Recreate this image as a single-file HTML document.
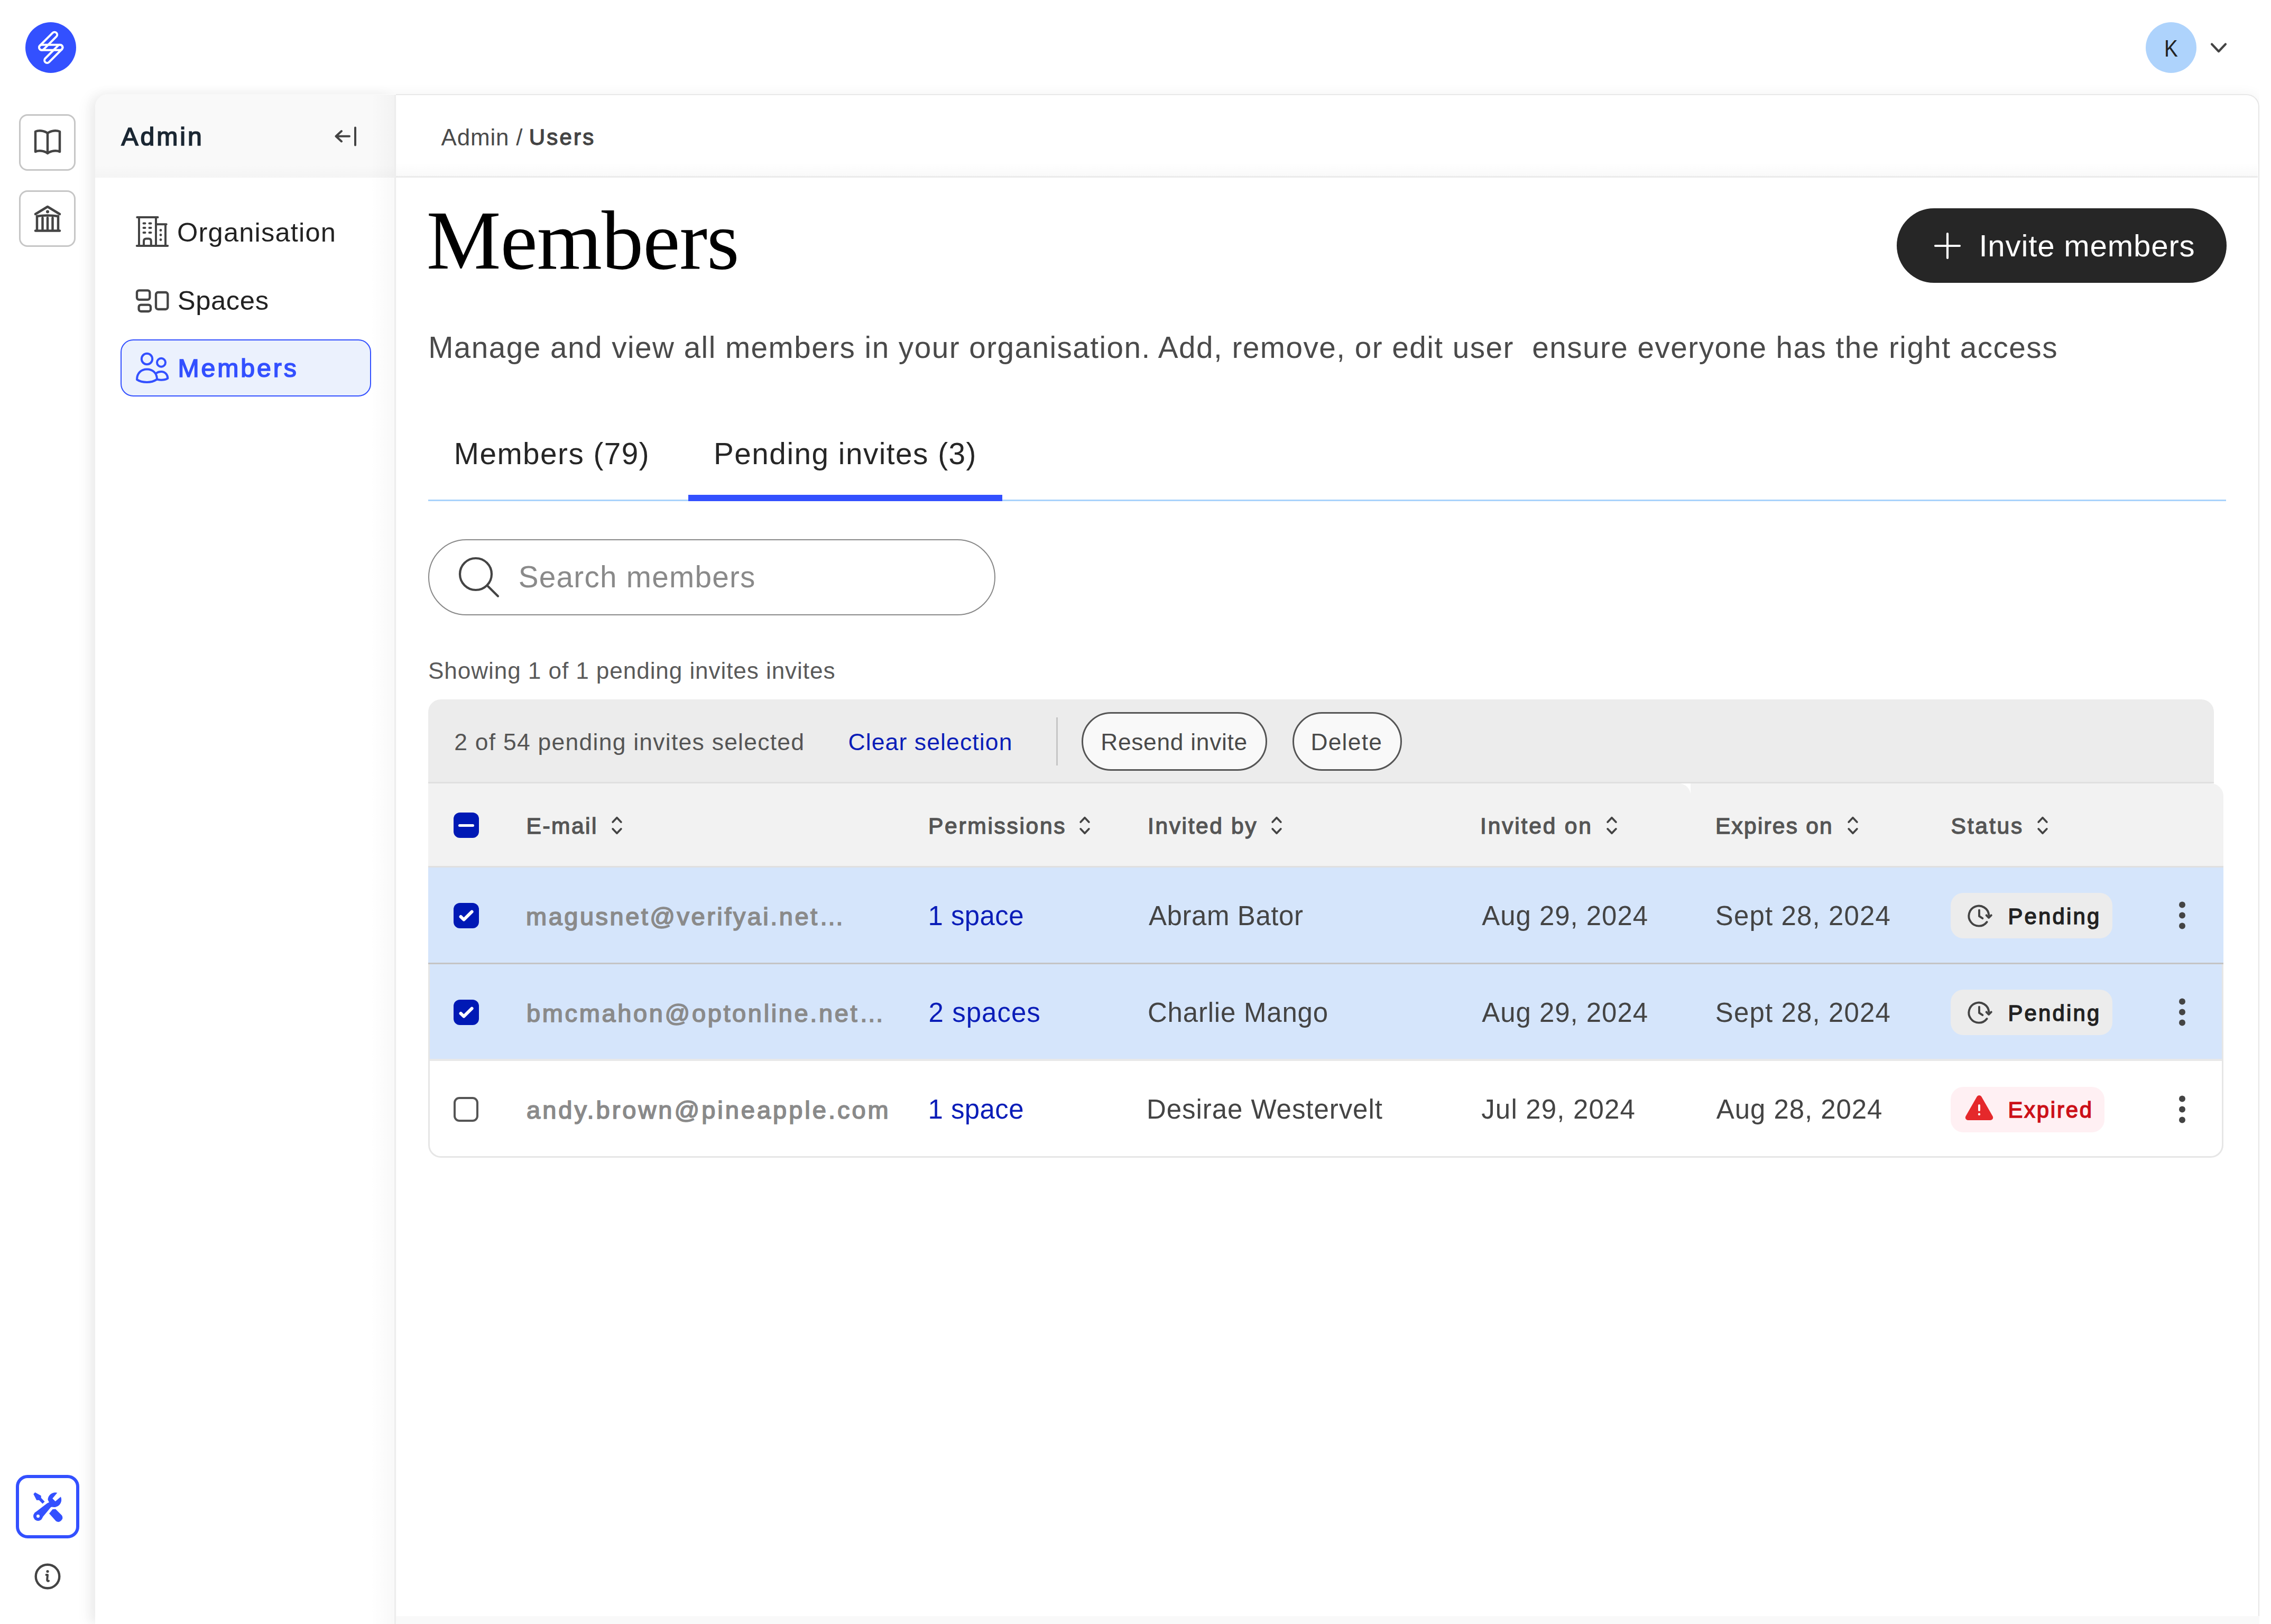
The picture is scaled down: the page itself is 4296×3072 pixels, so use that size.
<!DOCTYPE html><html><head><meta charset="utf-8"><style>
html,body{margin:0;padding:0;}
body{width:4296px;height:3072px;overflow:hidden;position:relative;background:#ffffff;font-family:"Liberation Sans",sans-serif;}
.t{position:absolute;white-space:pre;}
</style></head><body>
<div style="position:absolute;left:180px;top:178px;width:4094px;height:2894px;box-shadow:0 0 26px rgba(0,0,0,0.05);border-top-left-radius:24px;border-top-right-radius:24px;clip-path:inset(-60px 0 0 -60px);"></div>
<div style="position:absolute;left:749px;top:178px;width:3525px;height:2879px;background:#fff;border-top:2px solid #e8e8e8;border-right:2px solid #e6e6e6;box-sizing:border-box;border-top-right-radius:24px;"></div>
<div style="position:absolute;left:749px;top:3057px;width:3525px;height:15px;background:#f9f9f9;"></div>
<div style="position:absolute;left:749px;top:308px;width:3522px;height:25px;background:linear-gradient(rgba(0,0,0,0),rgba(0,0,0,0.022));"></div>
<div style="position:absolute;left:749px;top:333px;width:3522px;height:3px;background:#ebebeb;"></div>
<div style="position:absolute;left:180px;top:179px;width:569px;height:2893px;background:#fff;border-top-left-radius:24px;overflow:hidden;box-shadow:-14px 0 24px rgba(0,0,0,0.05);"><div style="position:absolute;left:0;top:0;width:569px;height:157px;background:#f9f9f9;"></div><div style="position:absolute;left:0;top:132px;width:569px;height:25px;background:linear-gradient(rgba(0,0,0,0),rgba(0,0,0,0.018));"></div><div style="position:absolute;left:0;top:0;width:2px;height:2893px;"></div><div style="position:absolute;right:0;top:0;width:48px;height:2893px;background:linear-gradient(90deg,rgba(0,0,0,0),rgba(0,0,0,0.028));"></div><div style="position:absolute;right:0;top:0;width:3px;height:2893px;background:#ededed;"></div></div>
<div style="position:absolute;left:48px;top:42px;width:96px;height:96px;border-radius:50%;background:#3350ff;"></div>
<svg style="position:absolute;left:48px;top:42px;overflow:visible" width="96" height="96" viewBox="48 42 96 96"><g fill="none" stroke="#fff" stroke-width="4"><rect x="69.05" y="72.7" width="44.1" height="10" rx="5" transform="rotate(-45 91.1 77.7)"/><rect x="74" y="84.7" width="44.5" height="10" rx="5"/><rect x="79.1" y="96.85" width="44.4" height="10" rx="5" transform="rotate(-45 101.3 101.85)"/></g></svg>
<div style="position:absolute;left:36px;top:216px;width:107px;height:107px;box-sizing:border-box;border:3px solid #c6c6c6;border-radius:16px;background:#fff;"></div>
<svg style="position:absolute;left:36px;top:216px;overflow:visible" width="107" height="107" viewBox="36 216 107 107"><g fill="none" stroke="#444444" stroke-width="4.5" stroke-linejoin="round" stroke-linecap="round"><path d="M90,252 C84,247 73,246 67,249 L67,287 C73,284 84,285 90,290 C96,285 107,284 113,287 L113,249 C107,246 96,247 90,252 Z"/><path d="M90,252 L90,289"/></g></svg>
<div style="position:absolute;left:36px;top:360px;width:107px;height:107px;box-sizing:border-box;border:3px solid #c6c6c6;border-radius:16px;background:#fff;"></div>
<svg style="position:absolute;left:36px;top:360px;overflow:visible" width="107" height="107" viewBox="36 360 107 107"><g fill="none" stroke="#444444" stroke-width="4.5" stroke-linejoin="round" stroke-linecap="round"><path d="M67,405 L90,391 L113,405"/><path d="M70,409 Q90,406 110,409"/><path d="M70,409 L70,435 M80.5,412 L80.5,435 M90,412 L90,435 M99.5,412 L99.5,435 M110,409 L110,435"/><path d="M67,436.5 L113,436.5"/></g><circle cx="90" cy="400.5" r="3" fill="#444444"/></svg>
<div style="position:absolute;left:30px;top:2790px;width:120px;height:120px;box-sizing:border-box;border:6px solid #3350ff;border-radius:22px;background:#fff;"></div>
<svg style="position:absolute;left:50px;top:2810px;overflow:visible" width="80" height="80" viewBox="50 2810 80 80"><g transform="translate(50 2810)" fill="#3350ff"><path d="M16.3,13 L27.6,19.2 L27.8,23.6 L34.5,30.5 L30.5,34.5 L23.9,27.8 L19.2,27.8 L13.3,16.3 Z"/><path d="M43,53 L49.5,45 L55,44.6 L67,56.5 A8,8 0 0 1 56,67.5 Z"/><path d="M14.8,52.2 L39.4,33.5 L47,30 L53,39 L46.3,40.9 L27.6,63.5 Z"/><circle cx="22" cy="58" r="9"/><path d="M40.5,27 A14,14 0 0 1 58.4,13.8 L49.3,24.6 L54.7,30 L65,21.2 A14,14 0 0 1 47,40 Z"/></g><circle cx="72" cy="2868" r="3" fill="#fff"/></svg>
<svg style="position:absolute;left:60px;top:2952px;overflow:visible" width="60" height="60" viewBox="60 2952 60 60"><circle cx="90" cy="2982" r="22.3" fill="none" stroke="#444444" stroke-width="4.4"/><circle cx="90" cy="2972.5" r="2.6" fill="#444444"/><path d="M87.5,2979 L90,2979 L89.2,2988 Q89,2991.5 92,2990.5" fill="none" stroke="#444444" stroke-width="4" stroke-linecap="round" stroke-linejoin="round"/></svg>
<div style="position:absolute;left:4059px;top:42px;width:96px;height:96px;border-radius:50%;background:#aed3fc;"></div>
<div id="avatar_k" class="t" style="left:4094.0px;top:70.1px;font-size:44.00px;line-height:44.00px;color:#222222;letter-spacing:0.00px;font-family:'Liberation Sans', sans-serif;transform:scaleX(0.88);transform-origin:0 0;">K</div>
<svg style="position:absolute;left:4175px;top:75px;overflow:visible" width="45" height="30" viewBox="4175 75 45 30"><path d="M4184,83.5 L4197,97.2 L4210,83.5" fill="none" stroke="#444444" stroke-width="4.2" stroke-linecap="round" stroke-linejoin="round"/></svg>
<div id="admin_h" class="t" style="left:229.4px;top:234.2px;font-size:48.23px;line-height:48.23px;color:#1b2733;-webkit-text-stroke:1.70px currentColor;letter-spacing:3.92px;font-family:'Liberation Sans', sans-serif;">Admin</div>
<svg style="position:absolute;left:625px;top:230px;overflow:visible" width="60" height="55" viewBox="625 230 60 55"><g fill="none" stroke="#444444" stroke-width="4" stroke-linecap="round" stroke-linejoin="round"><path d="M646,248 L635.5,257.7 L646,267.5 M635.5,257.7 L661,257.7 M672,241.5 L672,274.5"/></g></svg>
<svg style="position:absolute;left:250px;top:400px;overflow:visible" width="80" height="80" viewBox="250 400 80 80"><g fill="none" stroke="#444444" stroke-width="4" stroke-linecap="round" stroke-linejoin="round"><path d="M258.8,465 L317.2,465"/><path d="M263,465 L263,411 L295,411 L295,465"/><path d="M259.3,411 L298.5,411"/><path d="M295,424.2 L314.7,424.2 M313,424.2 L313,465"/><path d="M272,465 L272,456 Q272,451.5 276.5,451.5 L281.3,451.5 Q285.8,451.5 285.8,456 L285.8,465"/><path d="M271.5,422.4 L274.5,422.4 M282.5,422.4 L285.5,422.4 M271.5,431 L274.5,431 M282.5,431 L285.5,431 M271.5,440 L274.5,440 M282.5,440 L285.5,440"/></g><g fill="#444444"><circle cx="304" cy="435.5" r="2.4"/><circle cx="304" cy="444.5" r="2.4"/><circle cx="304" cy="453.5" r="2.4"/></g></svg>
<div id="nav_org" class="t" style="left:335.0px;top:414.9px;font-size:50.60px;line-height:50.60px;color:#222222;letter-spacing:1.18px;font-family:'Liberation Sans', sans-serif;">Organisation</div>
<svg style="position:absolute;left:250px;top:540px;overflow:visible" width="80" height="60" viewBox="250 540 80 60"><g fill="none" stroke="#444444" stroke-width="4.3" stroke-linejoin="round"><rect x="259" y="549.3" width="24.3" height="17.5" rx="4"/><rect x="262.6" y="576.6" width="22.4" height="12.4" rx="4"/><rect x="295" y="553" width="22.3" height="32" rx="4"/></g></svg>
<div id="nav_sp" class="t" style="left:335.8px;top:543.5px;font-size:50.80px;line-height:50.80px;color:#222222;letter-spacing:0.56px;font-family:'Liberation Sans', sans-serif;">Spaces</div>
<div style="position:absolute;left:228px;top:642px;width:474px;height:108px;box-sizing:border-box;border:2px solid #3350ff;border-radius:24px;background:#ebf1fd;"></div>
<svg style="position:absolute;left:250px;top:660px;overflow:visible" width="80" height="80" viewBox="250 660 80 80"><g fill="none" stroke="#3350ff" stroke-width="4" stroke-linecap="round" stroke-linejoin="round"><circle cx="278" cy="679" r="10.2"/><circle cx="305" cy="685.8" r="8"/><path d="M259,718 C259,706 267,698.5 278,698.5 C289,698.5 297,706 297,717.5 C291,721.5 285,723 278,723 C271,723 264,721.5 259,718 Z"/><path d="M295.5,706 C298,704 301.5,703 305,703 C312,703 317.3,708.5 317.3,715.7 C313.5,718 309.5,718.7 305,718.7 C302.5,718.7 300,718.3 297.6,717.8"/></g></svg>
<div id="nav_mem" class="t" style="left:336.4px;top:672.2px;font-size:48.23px;line-height:48.23px;color:#3350ff;-webkit-text-stroke:1.70px currentColor;letter-spacing:3.92px;font-family:'Liberation Sans', sans-serif;">Members</div>
<div id="bc_admin" class="t" style="left:834.6px;top:237.6px;font-size:44.00px;line-height:44.00px;color:#4a4a4a;letter-spacing:0.80px;font-family:'Liberation Sans', sans-serif;">Admin / </div>
<div id="bc_users" class="t" style="left:1000.8px;top:238.7px;font-size:41.97px;line-height:41.97px;color:#444444;-webkit-text-stroke:1.40px currentColor;letter-spacing:3.20px;font-family:'Liberation Sans', sans-serif;">Users</div>
<div id="title" class="t" style="left:806.8px;top:375.5px;font-size:158.40px;line-height:158.40px;color:#000000;letter-spacing:-1.04px;font-family:'Liberation Serif', serif;">Members</div>
<div style="position:absolute;left:3588px;top:394px;width:624px;height:141px;border-radius:71px;background:#262626;"></div>
<svg style="position:absolute;left:3650px;top:430px;overflow:visible" width="70" height="70" viewBox="3650 430 70 70"><path d="M3661,465 L3707,465 M3684,442 L3684,488" fill="none" stroke="#fff" stroke-width="4.2" stroke-linecap="round"/></svg>
<div id="btn" class="t" style="left:3743.4px;top:435.5px;font-size:58.20px;line-height:58.20px;color:#ffffff;letter-spacing:0.81px;font-family:'Liberation Sans', sans-serif;">Invite members</div>
<div id="subtitle" class="t" style="left:810.2px;top:629.8px;font-size:56.70px;line-height:56.70px;color:#4a4a4a;letter-spacing:1.46px;font-family:'Liberation Sans', sans-serif;">Manage and view all members in your organisation. Add, remove, or edit user  ensure everyone has the right access</div>
<div style="position:absolute;left:810px;top:945px;width:3401px;height:3px;background:#a9d3fb;"></div>
<div style="position:absolute;left:1302px;top:936px;width:594px;height:12px;background:#3350ff;"></div>
<div id="tab1" class="t" style="left:858.8px;top:830.8px;font-size:56.70px;line-height:56.70px;color:#262626;letter-spacing:1.45px;font-family:'Liberation Sans', sans-serif;">Members (79)</div>
<div id="tab2" class="t" style="left:1350.0px;top:830.8px;font-size:56.70px;line-height:56.70px;color:#262626;letter-spacing:1.50px;font-family:'Liberation Sans', sans-serif;">Pending invites (3)</div>
<div style="position:absolute;left:810px;top:1020px;width:1073px;height:144px;box-sizing:border-box;border:2.6px solid #888888;border-radius:72px;background:#fff;"></div>
<svg style="position:absolute;left:860px;top:1045px;overflow:visible" width="100" height="100" viewBox="860 1045 100 100"><g fill="none" stroke="#444444" stroke-width="4.2" stroke-linecap="round"><circle cx="900" cy="1086" r="30"/><path d="M921.5,1107.5 L942,1127.8"/></g></svg>
<div id="search" class="t" style="left:980.8px;top:1063.5px;font-size:56.70px;line-height:56.70px;color:#8a8a8a;letter-spacing:1.23px;font-family:'Liberation Sans', sans-serif;">Search members</div>
<div id="showing" class="t" style="left:810.0px;top:1246.6px;font-size:44.20px;line-height:44.20px;color:#5a5a5a;letter-spacing:0.88px;font-family:'Liberation Sans', sans-serif;">Showing 1 of 1 pending invites invites</div>
<div style="position:absolute;left:810px;top:1323px;width:3378px;height:156px;background:#ececec;border-top-left-radius:24px;border-top-right-radius:24px;"></div>
<div style="position:absolute;left:810px;top:1479px;width:3378px;height:3px;background:#e0e0e0;"></div>
<div id="sel" class="t" style="left:859.2px;top:1382.2px;font-size:44.50px;line-height:44.50px;color:#555555;letter-spacing:1.24px;font-family:'Liberation Sans', sans-serif;">2 of 54 pending invites selected</div>
<div id="clear" class="t" style="left:1604.5px;top:1382.2px;font-size:44.50px;line-height:44.50px;color:#0a1db8;letter-spacing:1.11px;font-family:'Liberation Sans', sans-serif;">Clear selection</div>
<div style="position:absolute;left:1998px;top:1357px;width:3px;height:91px;background:#c6c6c6;"></div>
<div style="position:absolute;left:2046px;top:1347px;width:351px;height:111px;box-sizing:border-box;border:3px solid #555555;border-radius:56px;background:#f9f9f9;"></div>
<div id="resend" class="t" style="left:2082.2px;top:1382.4px;font-size:44.30px;line-height:44.30px;color:#4a4a4a;letter-spacing:0.72px;font-family:'Liberation Sans', sans-serif;">Resend invite</div>
<div style="position:absolute;left:2445px;top:1347px;width:207px;height:111px;box-sizing:border-box;border:3px solid #555555;border-radius:56px;background:#f9f9f9;"></div>
<div id="delete" class="t" style="left:2479.4px;top:1382.4px;font-size:44.30px;line-height:44.30px;color:#4a4a4a;letter-spacing:1.29px;font-family:'Liberation Sans', sans-serif;">Delete</div>
<div style="position:absolute;left:810px;top:1482px;width:3396px;height:156px;background:#f2f2f2;border-top-right-radius:24px;"></div>
<div style="position:absolute;left:3176px;top:1482px;width:22px;height:23px;background:#fff;"><div style="position:absolute;left:0;top:0;width:22px;height:23px;background:#f2f2f2;border-top-right-radius:22px;"></div></div>
<div style="position:absolute;left:810px;top:1638px;width:3396px;height:3px;background:#e0e0e0;"></div>
<div style="position:absolute;left:810px;top:1641px;width:3396px;height:180px;background:#d5e5fb;"></div>
<div style="position:absolute;left:810px;top:1821px;width:3396px;height:3px;background:#c4c4c4;"></div>
<div style="position:absolute;left:810px;top:1824px;width:3396px;height:366px;box-sizing:border-box;border:3px solid #e6e6e6;border-top:none;border-bottom-left-radius:24px;border-bottom-right-radius:24px;background:#fff;overflow:hidden;"><div style="position:absolute;left:0;top:0;width:3390px;height:179px;background:#d5e5fb;"></div><div style="position:absolute;left:0;top:179px;width:3390px;height:4px;background:#e8e8e8;"></div></div>
<div style="position:absolute;left:858px;top:1537px;width:48px;height:48px;border-radius:12px;background:#0019b5;"></div>
<svg style="position:absolute;left:858px;top:1537px;overflow:visible" width="48" height="48" viewBox="858 1537 48 48"><path d="M869.5,1561.5 L894.5,1561.5" stroke="#fff" stroke-width="5" stroke-linecap="round"/></svg>
<div id="h_email" class="t" style="left:995.6px;top:1541.2px;font-size:42.57px;line-height:42.57px;color:#555555;-webkit-text-stroke:1.40px currentColor;letter-spacing:2.43px;font-family:'Liberation Sans', sans-serif;">E-mail</div>
<svg style="position:absolute;left:1157px;top:1545px;overflow:visible" width="20" height="33" viewBox="1157 1545 20 33"><g fill="none" stroke="#444444" stroke-width="3.8" stroke-linecap="round" stroke-linejoin="round"><path d="M1159.2,1555 L1167,1546.8 L1174.8,1555 M1159.2,1568 L1167,1576.2 L1174.8,1568"/></g></svg>
<div id="h_perm" class="t" style="left:1756.0px;top:1541.2px;font-size:42.57px;line-height:42.57px;color:#555555;-webkit-text-stroke:1.40px currentColor;letter-spacing:2.68px;font-family:'Liberation Sans', sans-serif;">Permissions</div>
<svg style="position:absolute;left:2042.3px;top:1545px;overflow:visible" width="20" height="33" viewBox="2042.3 1545 20 33"><g fill="none" stroke="#444444" stroke-width="3.8" stroke-linecap="round" stroke-linejoin="round"><path d="M2044.5,1555 L2052.3,1546.8 L2060.1,1555 M2044.5,1568 L2052.3,1576.2 L2060.1,1568"/></g></svg>
<div id="h_invby" class="t" style="left:2171.0px;top:1541.2px;font-size:42.57px;line-height:42.57px;color:#555555;-webkit-text-stroke:1.40px currentColor;letter-spacing:2.60px;font-family:'Liberation Sans', sans-serif;">Invited by</div>
<svg style="position:absolute;left:2405px;top:1545px;overflow:visible" width="20" height="33" viewBox="2405 1545 20 33"><g fill="none" stroke="#444444" stroke-width="3.8" stroke-linecap="round" stroke-linejoin="round"><path d="M2407.2,1555 L2415,1546.8 L2422.8,1555 M2407.2,1568 L2415,1576.2 L2422.8,1568"/></g></svg>
<div id="h_invon" class="t" style="left:2800.0px;top:1541.2px;font-size:42.57px;line-height:42.57px;color:#555555;-webkit-text-stroke:1.40px currentColor;letter-spacing:2.82px;font-family:'Liberation Sans', sans-serif;">Invited on</div>
<svg style="position:absolute;left:3038.5px;top:1545px;overflow:visible" width="20" height="33" viewBox="3038.5 1545 20 33"><g fill="none" stroke="#444444" stroke-width="3.8" stroke-linecap="round" stroke-linejoin="round"><path d="M3040.7,1555 L3048.5,1546.8 L3056.3,1555 M3040.7,1568 L3048.5,1576.2 L3056.3,1568"/></g></svg>
<div id="h_exp" class="t" style="left:3245.0px;top:1541.2px;font-size:42.57px;line-height:42.57px;color:#555555;-webkit-text-stroke:1.40px currentColor;letter-spacing:2.18px;font-family:'Liberation Sans', sans-serif;">Expires on</div>
<svg style="position:absolute;left:3494.8px;top:1545px;overflow:visible" width="20" height="33" viewBox="3494.8 1545 20 33"><g fill="none" stroke="#444444" stroke-width="3.8" stroke-linecap="round" stroke-linejoin="round"><path d="M3497.0,1555 L3504.8,1546.8 L3512.6000000000004,1555 M3497.0,1568 L3504.8,1576.2 L3512.6000000000004,1568"/></g></svg>
<div id="h_status" class="t" style="left:3690.4px;top:1541.2px;font-size:42.57px;line-height:42.57px;color:#555555;-webkit-text-stroke:1.40px currentColor;letter-spacing:2.87px;font-family:'Liberation Sans', sans-serif;">Status</div>
<svg style="position:absolute;left:3854px;top:1545px;overflow:visible" width="20" height="33" viewBox="3854 1545 20 33"><g fill="none" stroke="#444444" stroke-width="3.8" stroke-linecap="round" stroke-linejoin="round"><path d="M3856.2,1555 L3864,1546.8 L3871.8,1555 M3856.2,1568 L3864,1576.2 L3871.8,1568"/></g></svg>
<div style="position:absolute;left:858px;top:1708.2px;width:48px;height:48px;border-radius:12px;background:#0019b5;"></div>
<svg style="position:absolute;left:858px;top:1708.2px;overflow:visible" width="48" height="48" viewBox="858 1708.2 48 48"><path d="M871.6,1734.2 L877.4,1739.8 L892.6,1724.8" fill="none" stroke="#fff" stroke-width="6" stroke-linecap="round" stroke-linejoin="round"/></svg>
<div id="email1" class="t" style="left:995.0px;top:1709.9px;font-size:47.03px;line-height:47.03px;color:#8a8a8a;-webkit-text-stroke:1.70px currentColor;letter-spacing:3.48px;font-family:'Liberation Sans', sans-serif;">magusnet@verifyai.net…</div>
<div id="perm1" class="t" style="left:1755.6px;top:1707.4px;font-size:51.00px;line-height:51.00px;color:#0a1db8;letter-spacing:0.39px;font-family:'Liberation Sans', sans-serif;">1 space</div>
<div id="inv1" class="t" style="left:2173.0px;top:1707.4px;font-size:51.00px;line-height:51.00px;color:#444444;letter-spacing:0.57px;font-family:'Liberation Sans', sans-serif;">Abram Bator</div>
<div id="d1_1" class="t" style="left:2803.2px;top:1707.4px;font-size:51.00px;line-height:51.00px;color:#444444;letter-spacing:0.95px;font-family:'Liberation Sans', sans-serif;">Aug 29, 2024</div>
<div id="d2_1" class="t" style="left:3244.8px;top:1707.4px;font-size:51.00px;line-height:51.00px;color:#444444;letter-spacing:1.13px;font-family:'Liberation Sans', sans-serif;">Sept 28, 2024</div>
<div style="position:absolute;left:3690px;top:1689px;width:306px;height:86px;border-radius:24px;background:#ececec;"></div>
<svg style="position:absolute;left:3710px;top:1700px;overflow:visible" width="70" height="65" viewBox="3710 1700 70 65"><g transform="translate(3710 1700)" fill="none" stroke="#444444" stroke-width="3.9" stroke-linecap="round" stroke-linejoin="round"><path d="M48.6,44 A19,19 0 1 1 52.3,31"/><path d="M47.6,31.4 L52,36 L56.8,31.4"/><path d="M34,21.6 L34,33 L40.4,37.2"/></g></svg>
<div id="status1" class="t" style="left:3798.4px;top:1712.6px;font-size:41.82px;line-height:41.82px;color:#222222;-webkit-text-stroke:1.50px currentColor;letter-spacing:3.24px;font-family:'Liberation Sans', sans-serif;">Pending</div>
<svg style="position:absolute;left:4110px;top:1696px;overflow:visible" width="36" height="70" viewBox="4110 1696 36 70"><g fill="#444444"><circle cx="4128" cy="1711.5" r="6"/><circle cx="4128" cy="1731.5" r="6"/><circle cx="4128" cy="1751.5" r="6"/></g></svg>
<div style="position:absolute;left:858px;top:1891.2px;width:48px;height:48px;border-radius:12px;background:#0019b5;"></div>
<svg style="position:absolute;left:858px;top:1891.2px;overflow:visible" width="48" height="48" viewBox="858 1891.2 48 48"><path d="M871.6,1917.2 L877.4,1922.8 L892.6,1907.8" fill="none" stroke="#fff" stroke-width="6" stroke-linecap="round" stroke-linejoin="round"/></svg>
<div id="email2" class="t" style="left:996.0px;top:1892.8px;font-size:47.03px;line-height:47.03px;color:#8a8a8a;-webkit-text-stroke:1.70px currentColor;letter-spacing:3.62px;font-family:'Liberation Sans', sans-serif;">bmcmahon@optonline.net…</div>
<div id="perm2" class="t" style="left:1756.6px;top:1890.3px;font-size:51.00px;line-height:51.00px;color:#0a1db8;letter-spacing:1.02px;font-family:'Liberation Sans', sans-serif;">2 spaces</div>
<div id="inv2" class="t" style="left:2171.0px;top:1890.3px;font-size:51.00px;line-height:51.00px;color:#444444;letter-spacing:0.78px;font-family:'Liberation Sans', sans-serif;">Charlie Mango</div>
<div id="d1_2" class="t" style="left:2803.2px;top:1890.3px;font-size:51.00px;line-height:51.00px;color:#444444;letter-spacing:0.95px;font-family:'Liberation Sans', sans-serif;">Aug 29, 2024</div>
<div id="d2_2" class="t" style="left:3244.8px;top:1890.3px;font-size:51.00px;line-height:51.00px;color:#444444;letter-spacing:1.13px;font-family:'Liberation Sans', sans-serif;">Sept 28, 2024</div>
<div style="position:absolute;left:3690px;top:1872px;width:306px;height:86px;border-radius:24px;background:#ececec;"></div>
<svg style="position:absolute;left:3710px;top:1883px;overflow:visible" width="70" height="65" viewBox="3710 1883 70 65"><g transform="translate(3710 1883)" fill="none" stroke="#444444" stroke-width="3.9" stroke-linecap="round" stroke-linejoin="round"><path d="M48.6,44 A19,19 0 1 1 52.3,31"/><path d="M47.6,31.4 L52,36 L56.8,31.4"/><path d="M34,21.6 L34,33 L40.4,37.2"/></g></svg>
<div id="status2" class="t" style="left:3798.4px;top:1895.6px;font-size:41.82px;line-height:41.82px;color:#222222;-webkit-text-stroke:1.50px currentColor;letter-spacing:3.24px;font-family:'Liberation Sans', sans-serif;">Pending</div>
<svg style="position:absolute;left:4110px;top:1879px;overflow:visible" width="36" height="70" viewBox="4110 1879 36 70"><g fill="#444444"><circle cx="4128" cy="1894.5" r="6"/><circle cx="4128" cy="1914.5" r="6"/><circle cx="4128" cy="1934.5" r="6"/></g></svg>
<div style="position:absolute;left:858px;top:2074.5px;width:47px;height:47px;box-sizing:border-box;border:4px solid #555;border-radius:11px;background:#fff;"></div>
<div id="email3" class="t" style="left:996.1px;top:2075.7px;font-size:47.03px;line-height:47.03px;color:#8a8a8a;-webkit-text-stroke:1.70px currentColor;letter-spacing:3.98px;font-family:'Liberation Sans', sans-serif;">andy.brown@pineapple.com</div>
<div id="perm3" class="t" style="left:1755.6px;top:2073.2px;font-size:51.00px;line-height:51.00px;color:#0a1db8;letter-spacing:0.39px;font-family:'Liberation Sans', sans-serif;">1 space</div>
<div id="inv3" class="t" style="left:2169.0px;top:2073.2px;font-size:51.00px;line-height:51.00px;color:#444444;letter-spacing:0.94px;font-family:'Liberation Sans', sans-serif;">Desirae Westervelt</div>
<div id="d1_3" class="t" style="left:2802.2px;top:2073.2px;font-size:51.00px;line-height:51.00px;color:#444444;letter-spacing:1.17px;font-family:'Liberation Sans', sans-serif;">Jul 29, 2024</div>
<div id="d2_3" class="t" style="left:3246.8px;top:2073.2px;font-size:51.00px;line-height:51.00px;color:#444444;letter-spacing:0.92px;font-family:'Liberation Sans', sans-serif;">Aug 28, 2024</div>
<div style="position:absolute;left:3690px;top:2055.5px;width:291px;height:86px;border-radius:24px;background:#fff0f3;"></div>
<svg style="position:absolute;left:3705px;top:2059.5px;overflow:visible" width="80" height="70" viewBox="3705 2059.5 80 70"><g transform="translate(3705 2059.5)"><path d="M39,17 L17.8,54 L60.2,54 Z" fill="#e5282b" stroke="#e5282b" stroke-width="10" stroke-linejoin="round"/><path d="M39,31 L39,40" stroke="#fff" stroke-width="4" stroke-linecap="round"/><circle cx="39" cy="47.8" r="2.2" fill="#fff"/></g></svg>
<div id="status3" class="t" style="left:3798.4px;top:2078.5px;font-size:41.82px;line-height:41.82px;color:#cc1018;-webkit-text-stroke:1.50px currentColor;letter-spacing:2.80px;font-family:'Liberation Sans', sans-serif;">Expired</div>
<svg style="position:absolute;left:4110px;top:2062.5px;overflow:visible" width="36" height="70" viewBox="4110 2062.5 36 70"><g fill="#444444"><circle cx="4128" cy="2078.0" r="6"/><circle cx="4128" cy="2098.0" r="6"/><circle cx="4128" cy="2118.0" r="6"/></g></svg>
</body></html>
